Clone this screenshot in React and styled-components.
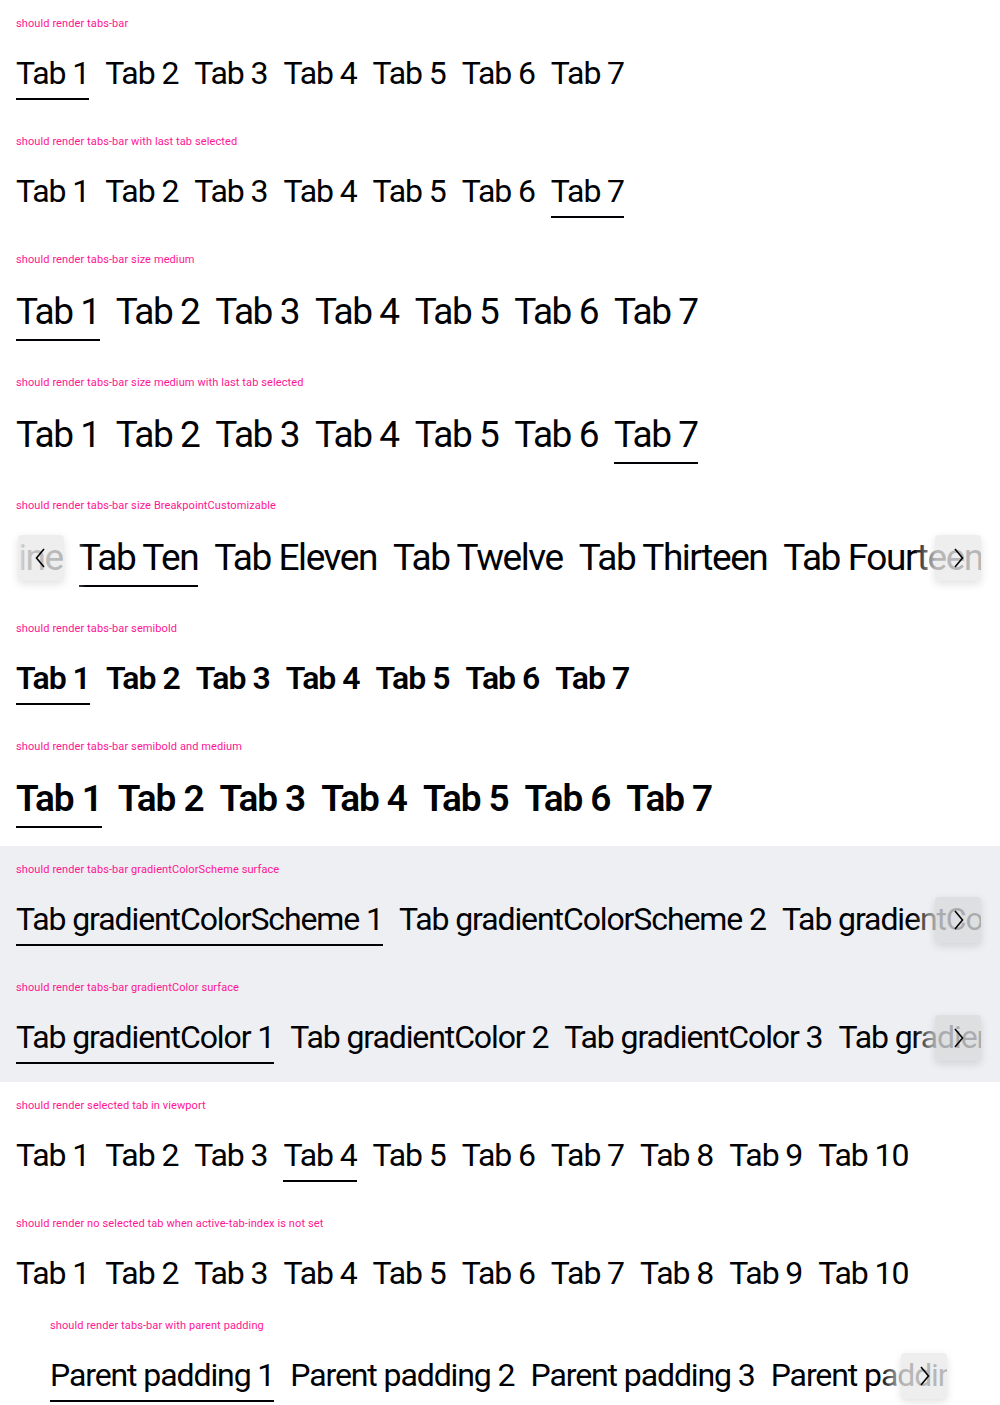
import React, { useLayoutEffect, useRef } from "react";
import styled, { createGlobalStyle, css } from "styled-components";

const GlobalStyle = createGlobalStyle`
  html, body {
    margin: 0;
    padding: 0;
    background: #fff;
    color: #010205;
    font-family: Roboto, "Liberation Sans", sans-serif;
  }
`;

const sizes = {
  small: { font: 32, line: 41, ls: -1.1, bold: -1.0 },
  medium: { font: 37, line: 46, ls: -1.45, bold: -1.1 },
};

const Page = styled.div`
  width: 1000px;
`;

const Surface = styled.div`
  background: ${(p) => p.$bg || "#fff"};
`;

const Story = styled.section`
  padding: 16px ${(p) => (p.$inset ? 50 : 16)}px ${(p) => (p.$compact ? 2 : 18)}px;
`;

const Label = styled.p`
  margin: 0;
  font-size: 11px;
  line-height: 16px;
  letter-spacing: 0.1px;
  color: #ff1493;
`;

const Bar = styled.div`
  position: relative;
  margin-top: 21px;
`;

const Scroller = styled.div`
  position: relative;
  display: flex;
  gap: 16px;
  overflow: hidden;
  white-space: nowrap;
`;

const Tab = styled.button`
  flex: 0 0 auto;
  margin: 0;
  padding: 0 0 4px;
  border: 0;
  border-bottom: 2px solid ${(p) => (p.$active ? "#010205" : "transparent")};
  background: none;
  color: #010205;
  font-family: Roboto, "Liberation Sans", sans-serif;
  font-size: ${(p) => sizes[p.$size].font}px;
  line-height: ${(p) => sizes[p.$size].line}px;
  letter-spacing: ${(p) => (p.$semibold ? sizes[p.$size].bold : sizes[p.$size].ls)}px;
  font-weight: ${(p) => (p.$semibold ? 600 : 400)};
  cursor: pointer;
`;

const Fade = styled.div`
  position: absolute;
  top: 0;
  bottom: 0;
  width: 70px;
  pointer-events: none;
  ${(p) =>
    p.$side === "next"
      ? css`
          right: 0;
          background: linear-gradient(
            90deg,
            ${p.$bg}00 0,
            ${p.$bg}c4 22px,
            ${p.$bg}c4 calc(100% - 3px),
            ${p.$bg} calc(100% - 3px)
          );
        `
      : css`
          left: 0;
          background: linear-gradient(
            270deg,
            ${p.$bg}00 0,
            ${p.$bg}c4 22px,
            ${p.$bg}d0 calc(100% - 8px),
            ${p.$bg} calc(100% - 2px)
          );
        `}
`;

const ScrollButton = styled.button`
  position: absolute;
  top: ${(p) => (sizes[p.$size].line - 46) / 2}px;
  ${(p) => (p.$side === "next" ? "right: 3px;" : "left: 2px;")}
  width: 46px;
  height: 46px;
  padding: 0;
  border: 0;
  border-radius: 4px;
  background: rgba(0, 0, 0, 0.065);
  box-shadow: 0 3px 8px rgba(0, 0, 0, 0.12);
  display: flex;
  align-items: center;
  justify-content: center;
  color: #010205;
  cursor: pointer;
`;

const Chevron = ({ dir }) => (
  <svg width="24" height="24" viewBox="0 0 24 24" fill="none">
    <path
      d={dir === "next" ? "M9 3 L16.5 12 L9 21" : "M15 3 L7.5 12 L15 21"}
      stroke="currentColor"
      strokeWidth="1.6"
    />
  </svg>
);

function TabsBar({ tabs, active, size = "small", semibold, prev, next, bg = "#ffffff", scrollTo, scrollOffset = 0 }) {
  const scroller = useRef(null);
  const items = useRef([]);

  // scroll the bar so the wanted tab sits where the screenshot has it
  useLayoutEffect(() => {
    if (scrollTo == null || !scroller.current) return;
    const el = items.current[scrollTo];
    if (el) scroller.current.scrollLeft = el.offsetLeft - scrollOffset;
  }, [scrollTo, scrollOffset]);

  return (
    <Bar>
      <Scroller ref={scroller}>
        {tabs.map((t, i) => (
          <Tab
            key={t}
            ref={(el) => (items.current[i] = el)}
            $size={size}
            $semibold={semibold}
            $active={i === active}
          >
            {t}
          </Tab>
        ))}
      </Scroller>
      {prev && (
        <>
          <Fade $side="prev" $bg={bg} />
          <ScrollButton $side="prev" $size={size}>
            <Chevron dir="prev" />
          </ScrollButton>
        </>
      )}
      {next && (
        <>
          <Fade $side="next" $bg={bg} />
          <ScrollButton $side="next" $size={size}>
            <Chevron dir="next" />
          </ScrollButton>
        </>
      )}
    </Bar>
  );
}

const seven = Array.from({ length: 7 }, (_, i) => `Tab ${i + 1}`);
const ten = Array.from({ length: 10 }, (_, i) => `Tab ${i + 1}`);
const words = [
  "One", "Two", "Three", "Four", "Five", "Six", "Seven", "Eight",
  "Nine", "Ten", "Eleven", "Twelve", "Thirteen", "Fourteen", "Fifteen",
];
const named = words.map((w) => `Tab ${w}`);
const list = (prefix, n) => Array.from({ length: n }, (_, i) => `${prefix} ${i + 1}`);

export default function App() {
  return (
    <Page>
      <GlobalStyle />

      <Story>
        <Label>should render tabs-bar</Label>
        <TabsBar tabs={seven} active={0} />
      </Story>

      <Story>
        <Label>should render tabs-bar with last tab selected</Label>
        <TabsBar tabs={seven} active={6} />
      </Story>

      <Story>
        <Label>should render tabs-bar size medium</Label>
        <TabsBar tabs={seven} active={0} size="medium" />
      </Story>

      <Story>
        <Label>should render tabs-bar size medium with last tab selected</Label>
        <TabsBar tabs={seven} active={6} size="medium" />
      </Story>

      <Story>
        <Label>should render tabs-bar size BreakpointCustomizable</Label>
        <TabsBar tabs={named} active={9} size="medium" prev next scrollTo={9} scrollOffset={63} />
      </Story>

      <Story>
        <Label>should render tabs-bar semibold</Label>
        <TabsBar tabs={seven} active={0} semibold />
      </Story>

      <Story>
        <Label>should render tabs-bar semibold and medium</Label>
        <TabsBar tabs={seven} active={0} size="medium" semibold />
      </Story>

      <Surface $bg="#eeeff2">
        <Story>
          <Label>should render tabs-bar gradientColorScheme surface</Label>
          <TabsBar tabs={list("Tab gradientColorScheme", 4)} active={0} next bg="#eeeff2" />
        </Story>
        <Story>
          <Label>should render tabs-bar gradientColor surface</Label>
          <TabsBar tabs={list("Tab gradientColor", 5)} active={0} next bg="#eeeff2" />
        </Story>
      </Surface>

      <Story>
        <Label>should render selected tab in viewport</Label>
        <TabsBar tabs={ten} active={3} />
      </Story>

      <Story $compact>
        <Label>should render no selected tab when active-tab-index is not set</Label>
        <TabsBar tabs={ten} />
      </Story>

      <Story $inset>
        <Label>should render tabs-bar with parent padding</Label>
        <TabsBar tabs={list("Parent padding", 5)} active={0} next />
      </Story>
    </Page>
  );
}
